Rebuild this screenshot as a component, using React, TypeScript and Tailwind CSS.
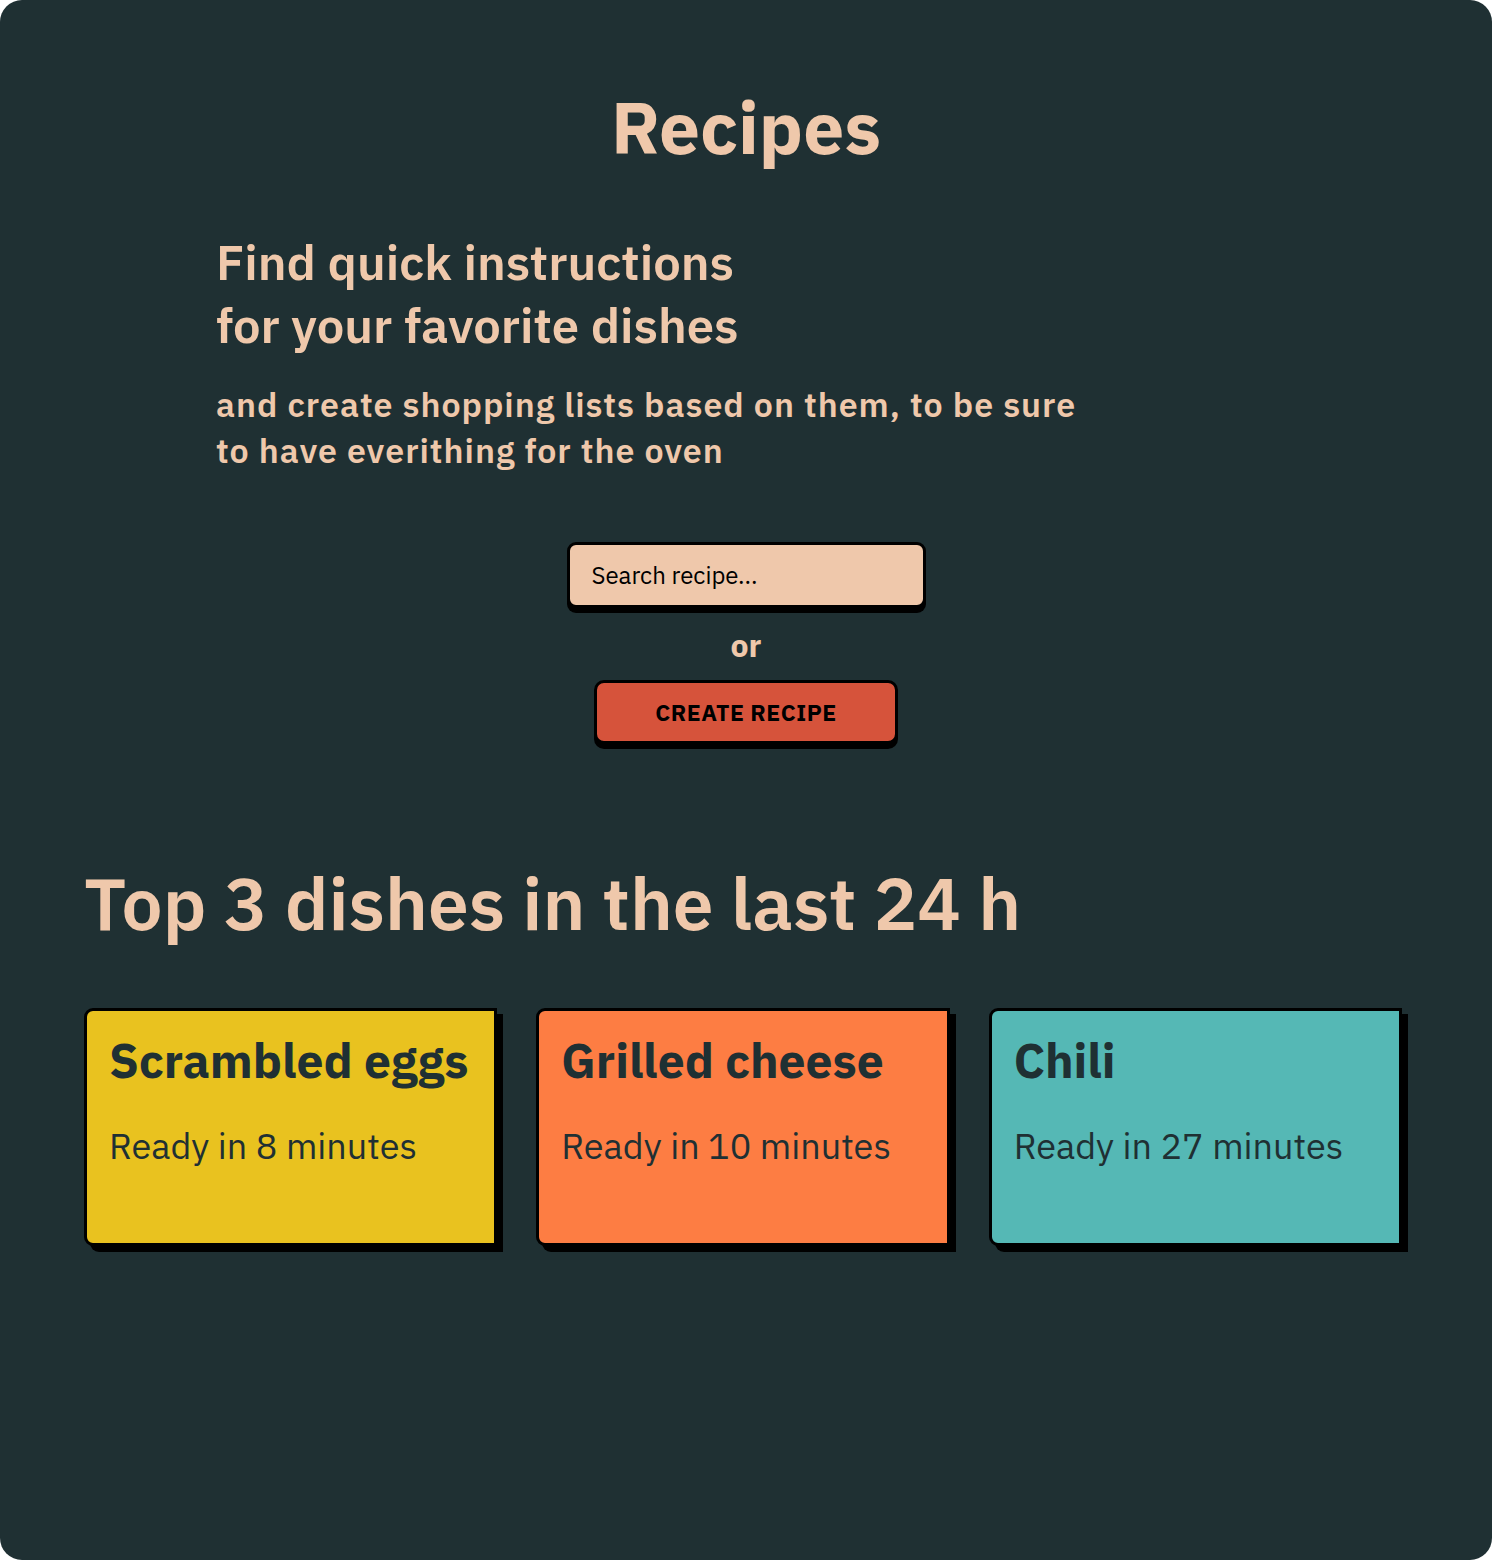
import React from 'react';

const DISHES = [
  { name: 'Scrambled eggs', minutes: 8, color: 'bg-[#e9c21f]' },
  { name: 'Grilled cheese', minutes: 10, color: 'bg-[#fd7d43]' },
  { name: 'Chili', minutes: 27, color: 'bg-[#55b8b5]' },
];

const DishCard = ({ name, minutes, color }: { name: string; minutes: number; color: string }) => (
  <div
    className={`${color} h-[238px] rounded-l-[9px] border-[3px] border-black px-[22px] pt-[18px] shadow-[6px_6px_0_0_#000]`}
  >
    <h3 className="text-[48px] font-bold leading-[62px] text-[#1f3033]">{name}</h3>
    <p className="mt-[32px] text-[36px] leading-[46px] text-[#1f3033]">Ready in {minutes} minutes</p>
  </div>
);

export default function App() {
  return (
    <div className="bg-white min-h-screen">
      <div
        className="w-[1492px] h-[1560px] rounded-[22px] bg-[#1f3033] text-[#efc8ab] overflow-hidden"
        style={{ fontFamily: '"IBM Plex Sans", "Noto Sans", "Open Sans", sans-serif' }}
      >
        <h1 className="pt-[82px] text-center text-[73px] font-bold leading-[90px]">Recipes</h1>

        <div className="ml-[216px] mt-[58px]">
          <h2 className="text-[49px] font-semibold leading-[63px]">
            Find quick instructions
            <br />
            for your favorite dishes
          </h2>
          <p className="mt-[25px] text-[34px] font-semibold leading-[46px] tracking-[1px]">
            and create shopping lists based on them, to be sure
            <br />
            to have everithing for the oven
          </p>
        </div>

        <div className="mt-[69px] flex flex-col items-center">
          <input
            type="text"
            placeholder="Search recipe..."
            className="h-[66px] w-[359px] rounded-[9px] border-[3px] border-black bg-[#efc8ab] px-[22px] text-[24px] text-black placeholder:text-black shadow-[0_5px_0_0_#000] outline-none"
          />
          <span className="mt-[17px] text-[32px] font-bold leading-[40px]">or</span>
          <button className="mt-[15px] h-[64px] w-[304px] rounded-[10px] border-[3px] border-black bg-[#d6533b] text-[23px] font-bold tracking-[0.5px] text-black shadow-[0_5px_0_0_#000]">
            CREATE RECIPE
          </button>
        </div>

        <div className="px-[84px] mt-[114px]">
          <h2 className="text-[73px] font-semibold leading-[90px]">Top 3 dishes in the last 24 h</h2>
          <div className="mt-[60px] grid grid-cols-3 gap-[39px] pr-[6px]">
            {DISHES.map((d) => (
              <DishCard key={d.name} {...d} />
            ))}
          </div>
        </div>
      </div>
    </div>
  );
}
